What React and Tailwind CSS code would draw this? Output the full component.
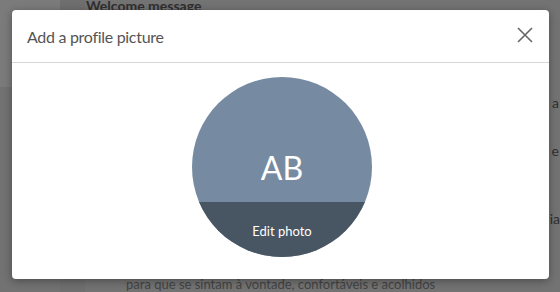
export default function App() {
  const font = { fontFamily: '"Source Sans Pro", Lato, "Noto Sans", sans-serif' };
  return (
    <div className="relative w-[560px] h-[292px] overflow-hidden bg-[#737373]" style={font}>
      {/* background page (dimmed) */}
      <div className="absolute inset-0 flex">
        <div className="w-[60px] h-full bg-[#7a7a7a] flex flex-col">
          <div className="h-[87px] bg-[#7b7b7b]"></div>
          <div className="flex-1 bg-[#727272]"></div>
        </div>
        <div className="w-[25px] h-full bg-[#6f6f6f]"></div>
        <div className="flex-1 flex flex-col pl-[1px] text-[#2f2f2f]">
          <div className="text-[14px] font-bold leading-[16px] -mt-[2px]">Welcome message</div>
          <div className="flex-1"></div>
          <div className="text-[13px] leading-[13px] opacity-70 whitespace-nowrap pl-[40px] mb-[1px]">para que se sintam à vontade, confortáveis e acolhidos</div>
        </div>
      </div>
      <div className="absolute right-[1px] top-[92px] text-[14px] text-[#2f2f2f]">a</div>
      <div className="absolute right-[1px] top-[140px] text-[14px] text-[#2f2f2f]">e</div>
      <div className="absolute right-[0px] top-[208px] text-[14px] text-[#2f2f2f]">ia</div>

      {/* modal */}
      <div className="absolute left-[12px] top-[10px] w-[537px] h-[269px] bg-white rounded-[4px] shadow-[0_2px_8px_rgba(0,0,0,0.35)] flex flex-col">
        <div className="h-[53px] flex items-center justify-between pl-[15px] pr-[15px] border-b border-[#d6d6d6]">
          <span className="text-[16px] tracking-[-0.3px] text-[#555] leading-none mt-[1px]">Add a profile picture</span>
          <svg width="16" height="16" viewBox="0 0 16 16" className="-mt-[3px] mr-[1px]">
            <path d="M1 1 L15 15 M15 1 L1 15" stroke="#666" strokeWidth="1.6" fill="none" />
          </svg>
        </div>
        <div className="flex-1 flex justify-center pt-[14px] pl-[3px]">
          <div className="relative w-[180px] h-[180px] rounded-full overflow-hidden bg-[#768ba2] flex flex-col">
            <div className="h-[125px] flex items-start justify-center pt-[75px]">
              <span className="text-white text-[32px] leading-none">AB</span>
            </div>
            <div className="flex-1 bg-[#485562] flex items-start justify-center pt-[23px]">
              <span className="text-white text-[13px] leading-none">Edit photo</span>
            </div>
          </div>
        </div>
      </div>
    </div>
  );
}
